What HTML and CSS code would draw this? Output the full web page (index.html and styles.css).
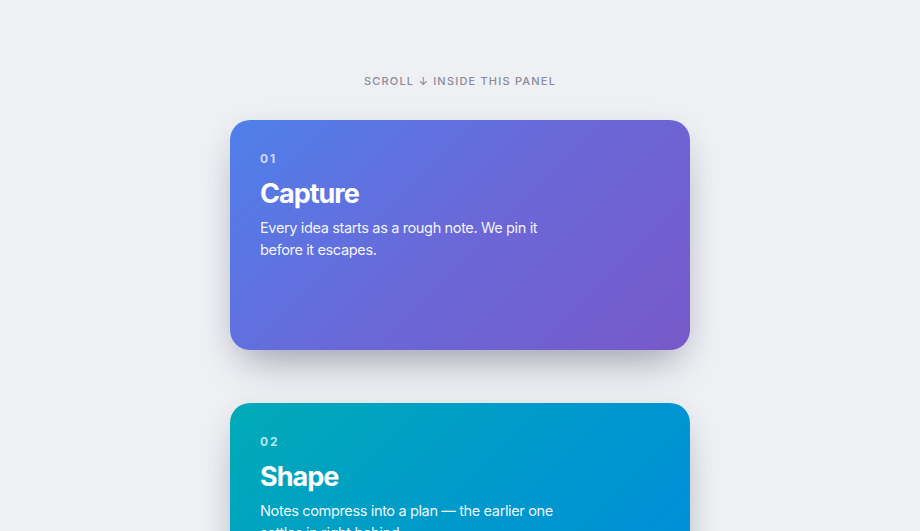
FILE: index.html
```html
<!DOCTYPE html>
<html lang="en">
<head>
<meta charset="utf-8">
<title>Scroll panel</title>
<link rel="stylesheet" href="styles.css">
</head>
<body>
<main class="panel">
  <p class="hint">Scroll ↓ inside this panel</p>
  <section class="stack">
    <article class="card card-capture">
      <span class="num">01</span>
      <h2 class="title">Capture</h2>
      <p class="text">Every idea starts as a rough note. We pin it before it escapes.</p>
    </article>
    <article class="card card-shape">
      <span class="num">02</span>
      <h2 class="title">Shape</h2>
      <p class="text">Notes compress into a plan — the earlier one settles in right behind.</p>
    </article>
  </section>
</main>
</body>
</html>
```
FILE: styles.css
```css
html, body {
  margin: 0;
  padding: 0;
  height: 100%;
  overflow: hidden;
}
body {
  background: #eff0f4;
  font-family: Inter, "Noto Sans", "Liberation Sans", sans-serif;
  color: #fff;
}
.panel {
  display: flex;
  flex-direction: column;
  align-items: center;
  padding-top: 74px;
}
.hint {
  margin: 0 0 32px;
  font-size: 11px;
  line-height: 14px;
  letter-spacing: 1.2px;
  text-transform: uppercase;
  color: #878b9b;
  font-weight: 500;
}
.stack {
  display: flex;
  flex-direction: column;
  gap: 53px;
}
.card {
  box-sizing: border-box;
  width: 460px;
  height: 230px;
  border-radius: 20px;
  padding: 32px 30px;
  display: flex;
  flex-direction: column;
  box-shadow: 0 22px 40px -14px rgba(30, 34, 60, 0.38), 0 4px 30px rgba(30, 34, 60, 0.06);
}
.card-capture {
  background: linear-gradient(135deg, #4f80ea 0%, #6a68d8 50%, #7759c9 100%);
}
.card-shape {
  background: linear-gradient(135deg, #00abb6 0%, #0099cc 50%, #008bdc 100%);
}
.num {
  font-size: 12px;
  line-height: 14px;
  font-weight: 700;
  letter-spacing: 2px;
  color: rgba(255, 255, 255, 0.72);
}
.title {
  margin: 11px 0 0;
  font-size: 27px;
  line-height: 34px;
  font-weight: 700;
  letter-spacing: -1px;
}
.text {
  margin: 6px 0 0;
  max-width: 300px;
  font-size: 14.6px;
  line-height: 22px;
  letter-spacing: -0.4px;
  color: rgba(255, 255, 255, 0.95);
}
```
